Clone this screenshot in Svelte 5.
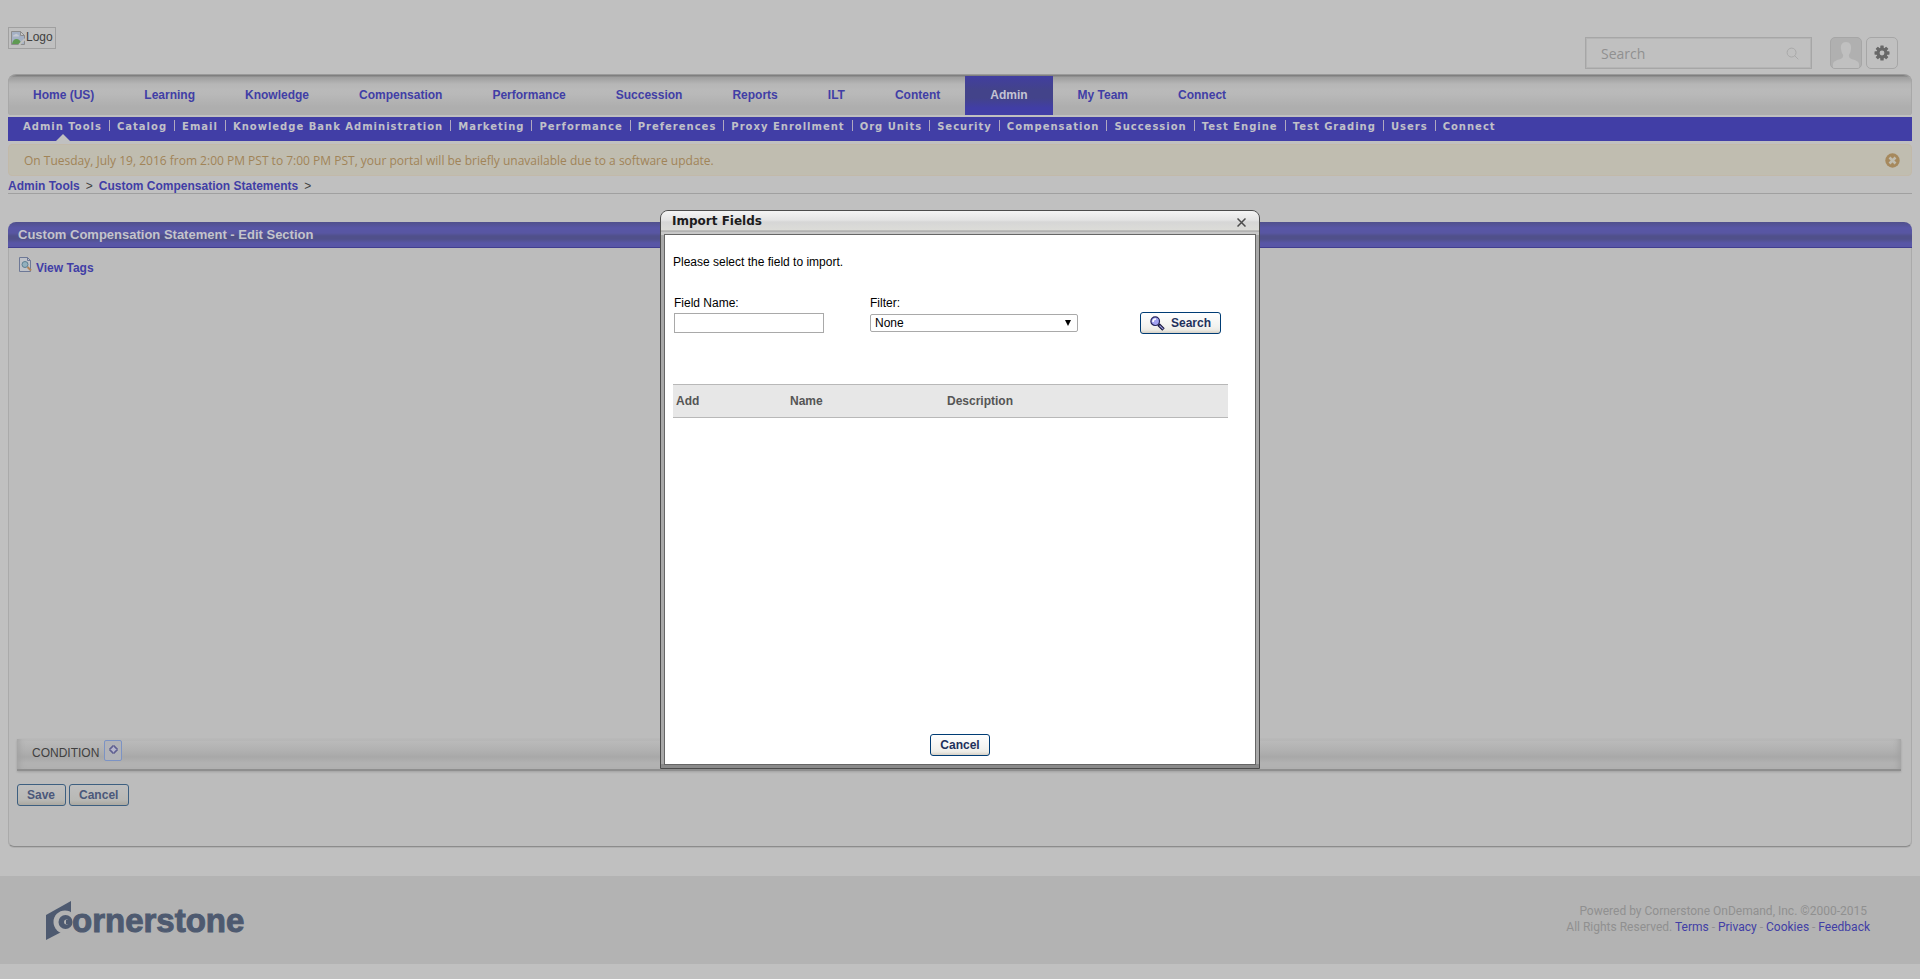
<script>
  const nav = ['Home (US)', 'Learning', 'Knowledge', 'Compensation', 'Performance', 'Succession', 'Reports', 'ILT', 'Content', 'Admin', 'My Team', 'Connect'];
  const sub = ['Admin Tools', 'Catalog', 'Email', 'Knowledge Bank Administration', 'Marketing', 'Performance', 'Preferences', 'Proxy Enrollment', 'Org Units', 'Security', 'Compensation', 'Succession', 'Test Engine', 'Test Grading', 'Users', 'Connect'];
  const legal = ['Terms', 'Privacy', 'Cookies', 'Feedback'];
</script>

<div class="page">
  <header class="top">
    <a class="logo" href="#home">
      <svg width="16" height="16" viewBox="0 0 16 16" aria-hidden="true">
        <path d="M1.5 1.5h9l4 4v9h-13z" fill="#a4b0c4" stroke="#8c8c8c" />
        <path d="M3 6.500q0-2 2-2 1-1.500 2.500 0 1.500 0 1.500 2z" fill="#c6cad2" />
        <path d="M2 14q1-5 4.500-5t5 5z" fill="#5f9a52" />
        <path d="M10.500 1.500v4h4z" fill="#c6c6c6" stroke="#8c8c8c" />
        <path d="M9 15l6-6" stroke="#c0c0c0" stroke-width="2" />
      </svg><span>Logo</span>
    </a>
    <div class="tools">
      <div class="search">
        <input type="text" placeholder="Search" aria-label="Search" />
        <svg width="13" height="13" viewBox="0 0 14 14" fill="none" stroke="#a6a6a6" aria-hidden="true"><circle cx="6" cy="6" r="4.800" /><path d="M9.500 9.500l3.700 3.700" /></svg>
      </div>
      <button class="avatar" aria-label="Profile">
        <svg width="30" height="30" viewBox="0 0 30 30" aria-hidden="true"><path d="M15 4c4 0 5.500 3 5 7-.3 2.500-1 4.500-2.200 6 0 2 .6 3.200 2.700 4 3.500 1.200 7.500 2 7.500 5.500V30H2v-3.500C2 23 6 22.200 9.500 21c2.100-.8 2.700-2 2.700-4-1.200-1.500-1.900-3.500-2.200-6-.5-4 1-7 5-7z" fill="#c0c0c0" /></svg>
      </button>
      <button class="gear" aria-label="Settings">
        <svg width="16" height="16" viewBox="-8 -8 16 16" aria-hidden="true">
          <g fill="#686868">
            {#each [0, 45, 90, 135] as a}
              <rect x="-1.700" y="-7.500" width="3.400" height="15" rx=".6" transform="rotate({a})" />
            {/each}
            <circle r="5.500" />
          </g>
          <circle r="2.400" fill="#c0c0c0" />
        </svg>
      </button>
    </div>
  </header>

  <nav class="main" aria-label="Main">
    {#each nav as item}
      <a href="#{item}" class:active={item === 'Admin'}>{item}</a>
    {/each}
  </nav>

  <nav class="sub" aria-label="Admin">
    {#each sub as item, i}
      <a href="#{item}" class:current={i === 0}><span>{item}</span></a>
    {/each}
  </nav>

  <div class="notice">
    <p>On Tuesday, July 19, 2016 from 2:00 PM PST to 7:00 PM PST, your portal will be briefly unavailable due to a software update.</p>
    <button aria-label="Dismiss">
      <svg width="15" height="15" viewBox="0 0 15 15" aria-hidden="true"><circle cx="7.500" cy="7.500" r="7.200" fill="#a6895d" /><path d="M4.500 4.500l6 6M10.500 4.500l-6 6" stroke="#c0bdb0" stroke-width="2.600" /></svg>
    </button>
  </div>

  <div class="crumbs">
    <a href="#tools">Admin Tools</a><i>&gt;</i><a href="#statements">Custom Compensation Statements</a><i>&gt;</i>
  </div>

  <main class="panel">
    <h1>Custom Compensation Statement - Edit Section</h1>
    <div class="panel-body">
      <a class="tags" href="#tags">
        <svg width="13" height="15" viewBox="0 0 13 15" aria-hidden="true"><path d="M.5.5h8l3 3v11H.5z" fill="#bfc2c8" stroke="#6d7896" /><path d="M8.500.5v3h3" fill="none" stroke="#6d7896" /><circle cx="6" cy="7.500" r="3" fill="#92b0bd" stroke="#5d7f92" /><path d="M8.500 10l3.500 3.500" stroke="#b08458" stroke-width="2" /></svg>
        <span>View Tags</span>
      </a>
      <div class="lower">
        <div class="condition">
          <span>CONDITION</span>
          <button aria-label="Add condition">
            <svg width="9" height="9" viewBox="0 0 9 9" aria-hidden="true"><path d="M3 1h3v2h2v3H6v2H3V6H1V3h2z" fill="#b6b6cc" stroke="#454482" /></svg>
          </button>
        </div>
        <div class="actions"><button class="btn dim">Save</button><button class="btn dim">Cancel</button></div>
      </div>
    </div>
  </main>

  <footer>
    <svg class="brand" width="202" height="40" viewBox="0 0 202 40" role="img" aria-label="Cornerstone">
      <path d="M1 14L26 0v26L1 39z" fill="#4e5a70" />
      <circle cx="20" cy="21" r="11.500" fill="#b3b3b3" />
      <path d="M20 21h12v10H15z" fill="#b3b3b3" />
      <circle cx="20.500" cy="21" r="7" fill="#4e5a70" />
      <circle cx="21.500" cy="21" r="2.500" fill="#b3b3b3" />
      <path d="M21 19h6v4h-6z" fill="#4e5a70" />
      <text x="27" y="31">ornerstone</text>
    </svg>
    <div class="legal">
      <p class="powered">Powered by Cornerstone OnDemand, Inc. ©2000-2015</p>
      <p>All Rights Reserved. {#each legal as l, i}{i ? ' - ' : ''}<a href="#{l}">{l}</a>{/each}</p>
    </div>
  </footer>
</div>

<div class="overlay">
  <div class="modal" role="dialog" aria-labelledby="dlg">
    <div class="title">
      <h2 id="dlg">Import Fields</h2>
      <button aria-label="Close"><svg width="9" height="9" viewBox="0 0 9 9" aria-hidden="true"><path d="M.5.5l8 8M8.500.5l-8 8" stroke="#4c4c4c" stroke-width="1.500" /></svg></button>
    </div>
    <div class="content">
      <p>Please select the field to import.</p>
      <div class="form">
        <div class="field name"><label for="fname">Field Name:</label><input id="fname" type="text" /></div>
        <div class="field filter">
          <label for="filter">Filter:</label>
          <div class="select"><select id="filter"><option>None</option></select><svg width="6" height="6" viewBox="0 0 6 6" aria-hidden="true"><path d="M0 0h6L3 6z" fill="#000" /></svg></div>
        </div>
        <button class="btn find">
          <svg width="15" height="15" viewBox="0 0 15 15" aria-hidden="true"><path d="M8.500 8.500l5 5" stroke="#15153c" stroke-width="3.400" /><path d="M9.500 9.500l3.700 3.700" stroke="#9c9ce0" stroke-width="1.200" /><circle cx="5.200" cy="5.200" r="4.300" fill="#a3a3f2" stroke="#23235c" stroke-width="1.200" /><path d="M3 6q0-3 3-3" stroke="#fff" stroke-width="1.500" fill="none" /></svg>
          Search
        </button>
      </div>
      <table>
        <thead><tr><th>Add</th><th>Name</th><th>Description</th></tr></thead>
      </table>
      <div class="foot"><button class="btn">Cancel</button></div>
    </div>
  </div>
</div>

<style>
  :global(body) { background: #c0c0c0; }
  :global(*) { box-sizing: border-box; }
  .page, .overlay { font: 12px/16px "Liberation Sans", Arial, sans-serif; color: #404040; }
  .page { min-height: 100vh; display: flex; flex-direction: column; }
  a { color: #413ea6; text-decoration: none; }
  p, h1, h2 { margin: 0; }
  button { font: inherit; padding: 0; cursor: pointer; }
  svg { display: block; flex: none; }

  .top { display: flex; justify-content: space-between; align-items: flex-start; padding: 27px 22px 5px 8px; }
  .logo { display: flex; align-items: center; border: 1px solid #a0a0a0; padding: 1px 2px 1px 1px; color: #404040; }
  .logo span { padding-bottom: 2px; }
  .tools { display: flex; margin-top: 10px; gap: 4px; }
  .search { display: flex; align-items: center; width: 227px; height: 32px; border: 1px solid #a6a6a6; box-shadow: inset 0 0 0 1px #b4b4b4; padding-right: 12px; margin-right: 14px; }
  .search input { flex: 1; min-width: 0; border: 0; background: none; padding: 2px 0 0 15px; font: 14px/20px "Open Sans", sans-serif; outline: none; }
  .search input::placeholder { color: #909090; opacity: 1; }
  .avatar, .gear { width: 32px; height: 32px; border: 1px solid #a6a6a6; border-radius: 5px; background: #b0b0b0; display: flex; align-items: center; justify-content: center; overflow: hidden; }
  .gear { background: #c0c0c0; }

  .main { margin: 0 8px 2px; height: 41px; display: flex; padding-top: 1px; border: solid #9a9a9a; border-width: 1px 0 0; border-radius: 8px 8px 3px 3px; background: linear-gradient(#7f7f7f 0 1px, #9e9e9e 2px, #a4a4a4 4px, #b6b6b6 9px, #bababa 15px, #b8b8b8 20px, #aeaeae 32px, #aeaeae); box-shadow: inset 1px 0 #a8a8a8, inset -1px 0 #a8a8a8; }
  .main a { padding: 0 25px; font-weight: bold; line-height: 38px; }
  .main a.active { color: #c4c4d4; background: linear-gradient(#413ea0, #43438a 14px, #43438a 22px, #413ea6 32px); }

  .sub { margin: 0 8px 3px; height: 24px; background: #413ea6; display: flex; padding: 3px 0 0 7px; font: bold 10px/14px "DejaVu Sans", Verdana, sans-serif; letter-spacing: 1px; }
  .sub a { color: #c0c0c8; padding: 0 7px 0 8px; height: 11px; position: relative; white-space: nowrap; }
  .sub a + a { border-left: 1px solid #b0a8c0; padding-left: 7px; }
  .current::after { content: ""; position: absolute; left: 50%; top: 14px; margin-left: -6px; border: 7px solid transparent; border-top: 0; border-bottom-color: #c0c0c0; }

  .notice { margin: 0 8px; height: 32px; display: flex; align-items: center; justify-content: space-between; padding: 0 11px 0 15px; background: #c0bdb0; border: 1px solid #c2b9a9; border-radius: 4px; }
  .notice p { padding-top: 2px; font: 12px/16px "Open Sans", sans-serif; color: #a08458; }
  .notice button { border: 0; background: none; }
  .crumbs { margin: 0 8px 28px; padding-top: 2px; height: 18px; border-bottom: 1px solid #a0a0a0; font-weight: bold; }
  .crumbs i { font-style: normal; font-weight: normal; margin: 0 6px; }

  .panel { margin: 0 8px; display: flex; flex-direction: column; border-radius: 8px 8px 6px 6px; }
  .panel h1 { height: 26px; padding: 0 10px; border-radius: 8px 8px 0 0; border-bottom: 1px solid #413e90; font-size: 13px; line-height: 25px; color: #c4c4cc; background: linear-gradient(#50508c, #5856a6 6px, #5856a2 11px, #50508a 14px, #50508a 17px, #5856a6 21px); }
  .panel-body { display: flex; flex-direction: column; min-height: 599px; padding: 9px 10px 40px 8px; background: #bcbcbc; border: 1px solid #aaa; border-top: 0; border-bottom-color: #8c8c8c; border-radius: 0 0 6px 6px; box-shadow: 0 1px #b0b0b0; }
  .tags { display: flex; gap: 4px; padding-left: 2px; font-weight: bold; align-self: flex-start; }
  .tags span { padding-top: 3px; }
  .lower { margin-top: auto; }
  .condition { height: 32px; display: flex; align-items: center; gap: 5px; padding: 0 15px 2px; margin-bottom: 13px; border-bottom: 2px solid #8e8e8e; background: linear-gradient(#bcbcbc, #b0b0b0 12px, #a8a8a8 18px, #b2b2b2 24px); box-shadow: 0 1px 2px #a0a0a0, inset 6px 0 6px -4px #a0a0a0, inset -6px 0 6px -4px #a0a0a0; }
  .condition button { width: 18px; height: 21px; border: 1px solid #7c93c4; border-radius: 2px; background: #b2b3b8; display: flex; justify-content: center; padding-top: 4px; margin-bottom: 5px; }
  .actions { display: flex; gap: 3px; }
  .btn { height: 22px; padding: 0 9px; display: inline-flex; align-items: center; border: 1px solid #003c74; border-radius: 3px; font-weight: bold; line-height: 18px; color: #1f315c; background: linear-gradient(#fff, #f2f2ee 14px, #ecebe5 17px, #d6d0c5); }
  .dim { padding: 0 10px 0 9px; border-color: #3d5f80; color: #4b587a; background: linear-gradient(#bfbfbf, #b8b8b5 15px, #aaa8a0); }

  footer { margin-top: 29px; background: #b3b3b3; height: 88px; display: flex; justify-content: space-between; align-items: flex-start; padding: 25px 50px 0 45px; }
  .brand text { font: bold 33px "Liberation Sans", Arial, sans-serif; fill: #4e5a70; stroke: #4e5a70; stroke-width: 1px; }
  .legal { padding-top: 2px; font: 12px/16px Roboto, sans-serif; color: #909090; text-align: right; }
  .powered { padding-right: 3px; }

  .overlay { position: fixed; inset: 0; display: flex; align-items: center; justify-content: center; color: #000; }
  .modal { width: 600px; border: 1px solid #4c4c4c; border-radius: 8px 8px 0 0; background: #a8a8a8; padding: 0 4px 4px; box-shadow: inset 0 -4px #8a8a8a; overflow: hidden; }
  .title { margin: 0 -4px; height: 24px; padding: 0 13px 2px 11px; display: flex; justify-content: space-between; align-items: center; background: linear-gradient(#f4f4f4, #e4e4e4 9px, #d6d6d6 11px, #dcdcd8 19px, #9c9c9c 20px, #c8c8c8 21px, #c8c8c8); }
  .title h2 { font: bold 12px/18px "DejaVu Sans", Verdana, sans-serif; color: #1c1c1c; padding-bottom: 3px; }
  .title button { border: 0; background: none; }
  .content { background: #fff; outline: 1px solid #666; min-height: 529px; padding: 19px 27px 8px 8px; display: flex; flex-direction: column; }
  .form { display: flex; align-items: flex-end; padding: 25px 7px 0 1px; margin-bottom: 51px; }
  .field { display: flex; flex-direction: column; gap: 2px; }
  .name { width: 150px; margin-right: 46px; }
  .filter { width: 208px; }
  .name input { height: 20px; border: 1px solid #a9a9a9; width: 100%; }
  .select { position: relative; padding: 1px 0; }
  .select select { display: block; appearance: none; width: 100%; height: 18px; border: 1px solid #a9a9a9; border-radius: 2px; background: #fff; font: inherit; color: #000; padding: 0 4px; }
  .select svg { position: absolute; right: 7px; top: 7px; }
  .find { margin: 0 0 -1px auto; gap: 6px; }
  table { width: 100%; border-collapse: collapse; table-layout: fixed; background: #e7e7e7; border: solid #b8b8b8; border-width: 1px 0; }
  th { height: 33px; padding: 0 3px; text-align: left; color: #555; }
  th:nth-child(1) { width: 114px; }
  th:nth-child(2) { width: 157px; }
  .foot { margin: auto -19px 0 0; text-align: center; }
</style>
